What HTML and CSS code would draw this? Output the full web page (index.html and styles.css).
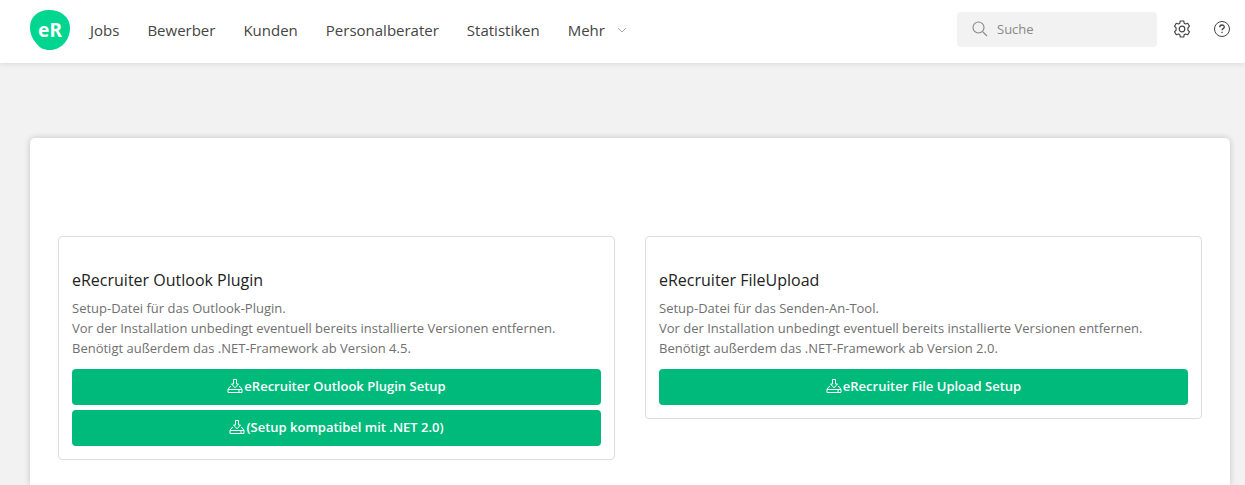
FILE: index.html
```html
<!DOCTYPE html>
<html lang="de">
<head>
<meta charset="utf-8">
<meta name="viewport" content="width=device-width, initial-scale=1">
<title>eRecruiter Downloads</title>
<link rel="stylesheet" href="styles.css">
</head>
<body>
<svg class="sprite" aria-hidden="true">
  <symbol id="download" viewBox="0 0 16 16">
    <path d="M6.500 1.500h3v4.500h2L8 9.800 4.500 6h2zM4 8.500H3L1 11.500v3h14v-3L13 8.500h-1M1 11.500h14M11 13h2" fill="none" stroke="currentColor" stroke-linejoin="round"/>
  </symbol>
</svg>
<header class="topbar">
  <a class="logo" href="#" aria-label="eRecruiter Startseite">
    <svg class="logo-shape" viewBox="0 0 40 40" aria-hidden="true">
      <path d="M19 0C31 0 40 7 40 18C40 30 31 40 20 40C13 40 10 38 6 33C2 28 0 24 0 17C0 7 8 0 19 0Z" fill="#00d68f"/>
      <text class="logo-text" x="20" y="27" text-anchor="middle">eR</text>
    </svg>
  </a>
  <nav class="nav">
    <a href="#">Jobs</a>
    <a href="#">Bewerber</a>
    <a href="#">Kunden</a>
    <a href="#">Personalberater</a>
    <a href="#">Statistiken</a>
    <button class="more" type="button">Mehr
      <svg class="chevron" viewBox="0 0 10 6" aria-hidden="true"><path d="M1 1l4 4 4-4" fill="none" stroke="currentColor"/></svg>
    </button>
  </nav>
  <div class="tools">
    <label class="search">
      <svg class="search-icon" viewBox="0 0 16 16" aria-hidden="true"><path d="M11 11l4 4M12 6.500a5.500 5.500 0 1 1-11 0 5.500 5.500 0 0 1 11 0z" fill="none" stroke="currentColor" stroke-width="1.100"/></svg>
      <input type="search" placeholder="Suche" aria-label="Suche">
    </label>
    <button class="tool" type="button" aria-label="Einstellungen">
      <svg viewBox="0 0 18 18" aria-hidden="true"><path d="M7.300 1h3.400l.5 2.200 1.300.8 2.200-.7 1.800 2.900-1.600 1.700v2.200l1.600 1.700-1.800 2.900-2.200-.7-1.300.8-.5 2.200H7.300l-.5-2.200-1.300-.8-2.200.7-1.800-2.900 1.600-1.700V7.900L1.500 6.200l1.800-2.900 2.200.7 1.300-.8z" fill="none" stroke="currentColor" stroke-width="1.200" stroke-linejoin="round"/><circle cx="9" cy="9" r="2.800" fill="none" stroke="currentColor" stroke-width="1.200"/></svg>
    </button>
    <button class="tool" type="button" aria-label="Hilfe">
      <svg viewBox="0 0 18 18" aria-hidden="true"><circle cx="9" cy="9" r="7.500" fill="none" stroke="currentColor"/><path d="M6.700 7.300C6.700 4.300 11.300 4.300 11.300 7c0 1.700-2.300 1.600-2.300 3.300M9 11.700v1.300" fill="none" stroke="currentColor" stroke-width="1.300"/></svg>
    </button>
  </div>
</header>
<main class="panel">
  <section class="card">
    <h2>eRecruiter Outlook Plugin</h2>
    <p>Setup-Datei für das Outlook-Plugin.<br>Vor der Installation unbedingt eventuell bereits installierte Versionen entfernen.<br>Benötigt außerdem das .NET-Framework ab Version 4.5.</p>
    <div class="actions">
      <a class="button" href="#"><svg aria-hidden="true"><use href="#download"/></svg>eRecruiter Outlook Plugin Setup</a>
      <a class="button" href="#"><svg aria-hidden="true"><use href="#download"/></svg>(Setup kompatibel mit .NET 2.0)</a>
    </div>
  </section>
  <section class="card">
    <h2>eRecruiter FileUpload</h2>
    <p>Setup-Datei für das Senden-An-Tool.<br>Vor der Installation unbedingt eventuell bereits installierte Versionen entfernen.<br>Benötigt außerdem das .NET-Framework ab Version 2.0.</p>
    <div class="actions">
      <a class="button" href="#"><svg aria-hidden="true"><use href="#download"/></svg>eRecruiter File Upload Setup</a>
    </div>
  </section>
</main>
</body>
</html>
```
FILE: styles.css
```css
* { box-sizing: border-box; }
body {
  margin: 0;
  min-height: 100vh;
  display: flex;
  flex-direction: column;
  background: #f2f2f2;
  color: #707070;
  font: 13px/20px "Open Sans", "Noto Sans", sans-serif;
}
a { color: inherit; text-decoration: none; }
button { border: 0; padding: 0; background: none; color: inherit; font: inherit; cursor: pointer; }
svg { display: block; flex: none; }
.sprite { position: absolute; width: 0; height: 0; }

.topbar {
  display: flex;
  align-items: center;
  padding: 10px 14px 13px 30px;
  background: #fff;
  color: #444;
  box-shadow: 0 1px 6px rgba(0, 0, 0, .1);
}
.logo-shape { width: 40px; height: 40px; }
.logo-text { fill: #fff; font: bold 19px "Noto Sans", sans-serif; }
.nav { display: flex; gap: 28px; margin-left: 20px; font-size: 15px; }
.more { display: flex; align-items: center; gap: 12px; }
.chevron { width: 10px; height: 6px; color: #aaa; }
.tools { display: flex; align-items: center; gap: 22px; margin: 0 0 2px auto; }
.search {
  display: flex;
  align-items: center;
  gap: 9px;
  width: 200px;
  height: 35px;
  margin-right: -6px;
  padding: 0 15px;
  border-radius: 4px;
  background: #f2f2f2;
}
.search-icon { width: 16px; height: 16px; color: #888; }
.search input { flex: 1; min-width: 0; border: 0; padding: 0; background: none; outline: 0; color: #444; font: inherit; }
.search input::placeholder { color: #888; opacity: 1; }
.tool svg { width: 18px; height: 18px; }

.panel {
  flex: 1;
  display: grid;
  grid-template-columns: 1fr 1fr;
  align-items: start;
  gap: 30px;
  margin: 75px 15px 0 30px;
  padding: 98px 28px 25px;
  border-radius: 5px 5px 0 0;
  background: #fff;
  box-shadow: 0 0 6px rgba(0, 0, 0, .2);
}
.card { padding: 31px 13px 13px; border: 1px solid #ddd; border-radius: 4px; }
h2 { margin: 0 0 6px; color: #222; font-size: 16px; font-weight: 400; line-height: 24px; }
p { margin: 0 0 11px; }
.actions { display: grid; gap: 5px; }
.button {
  display: flex;
  align-items: center;
  justify-content: center;
  gap: 1px;
  min-height: 36px;
  padding-bottom: 2px;
  border-radius: 4px;
  background: #00ba7c;
  color: #fff;
  font-weight: 600;
}
.button svg { width: 16px; height: 16px; }
```
